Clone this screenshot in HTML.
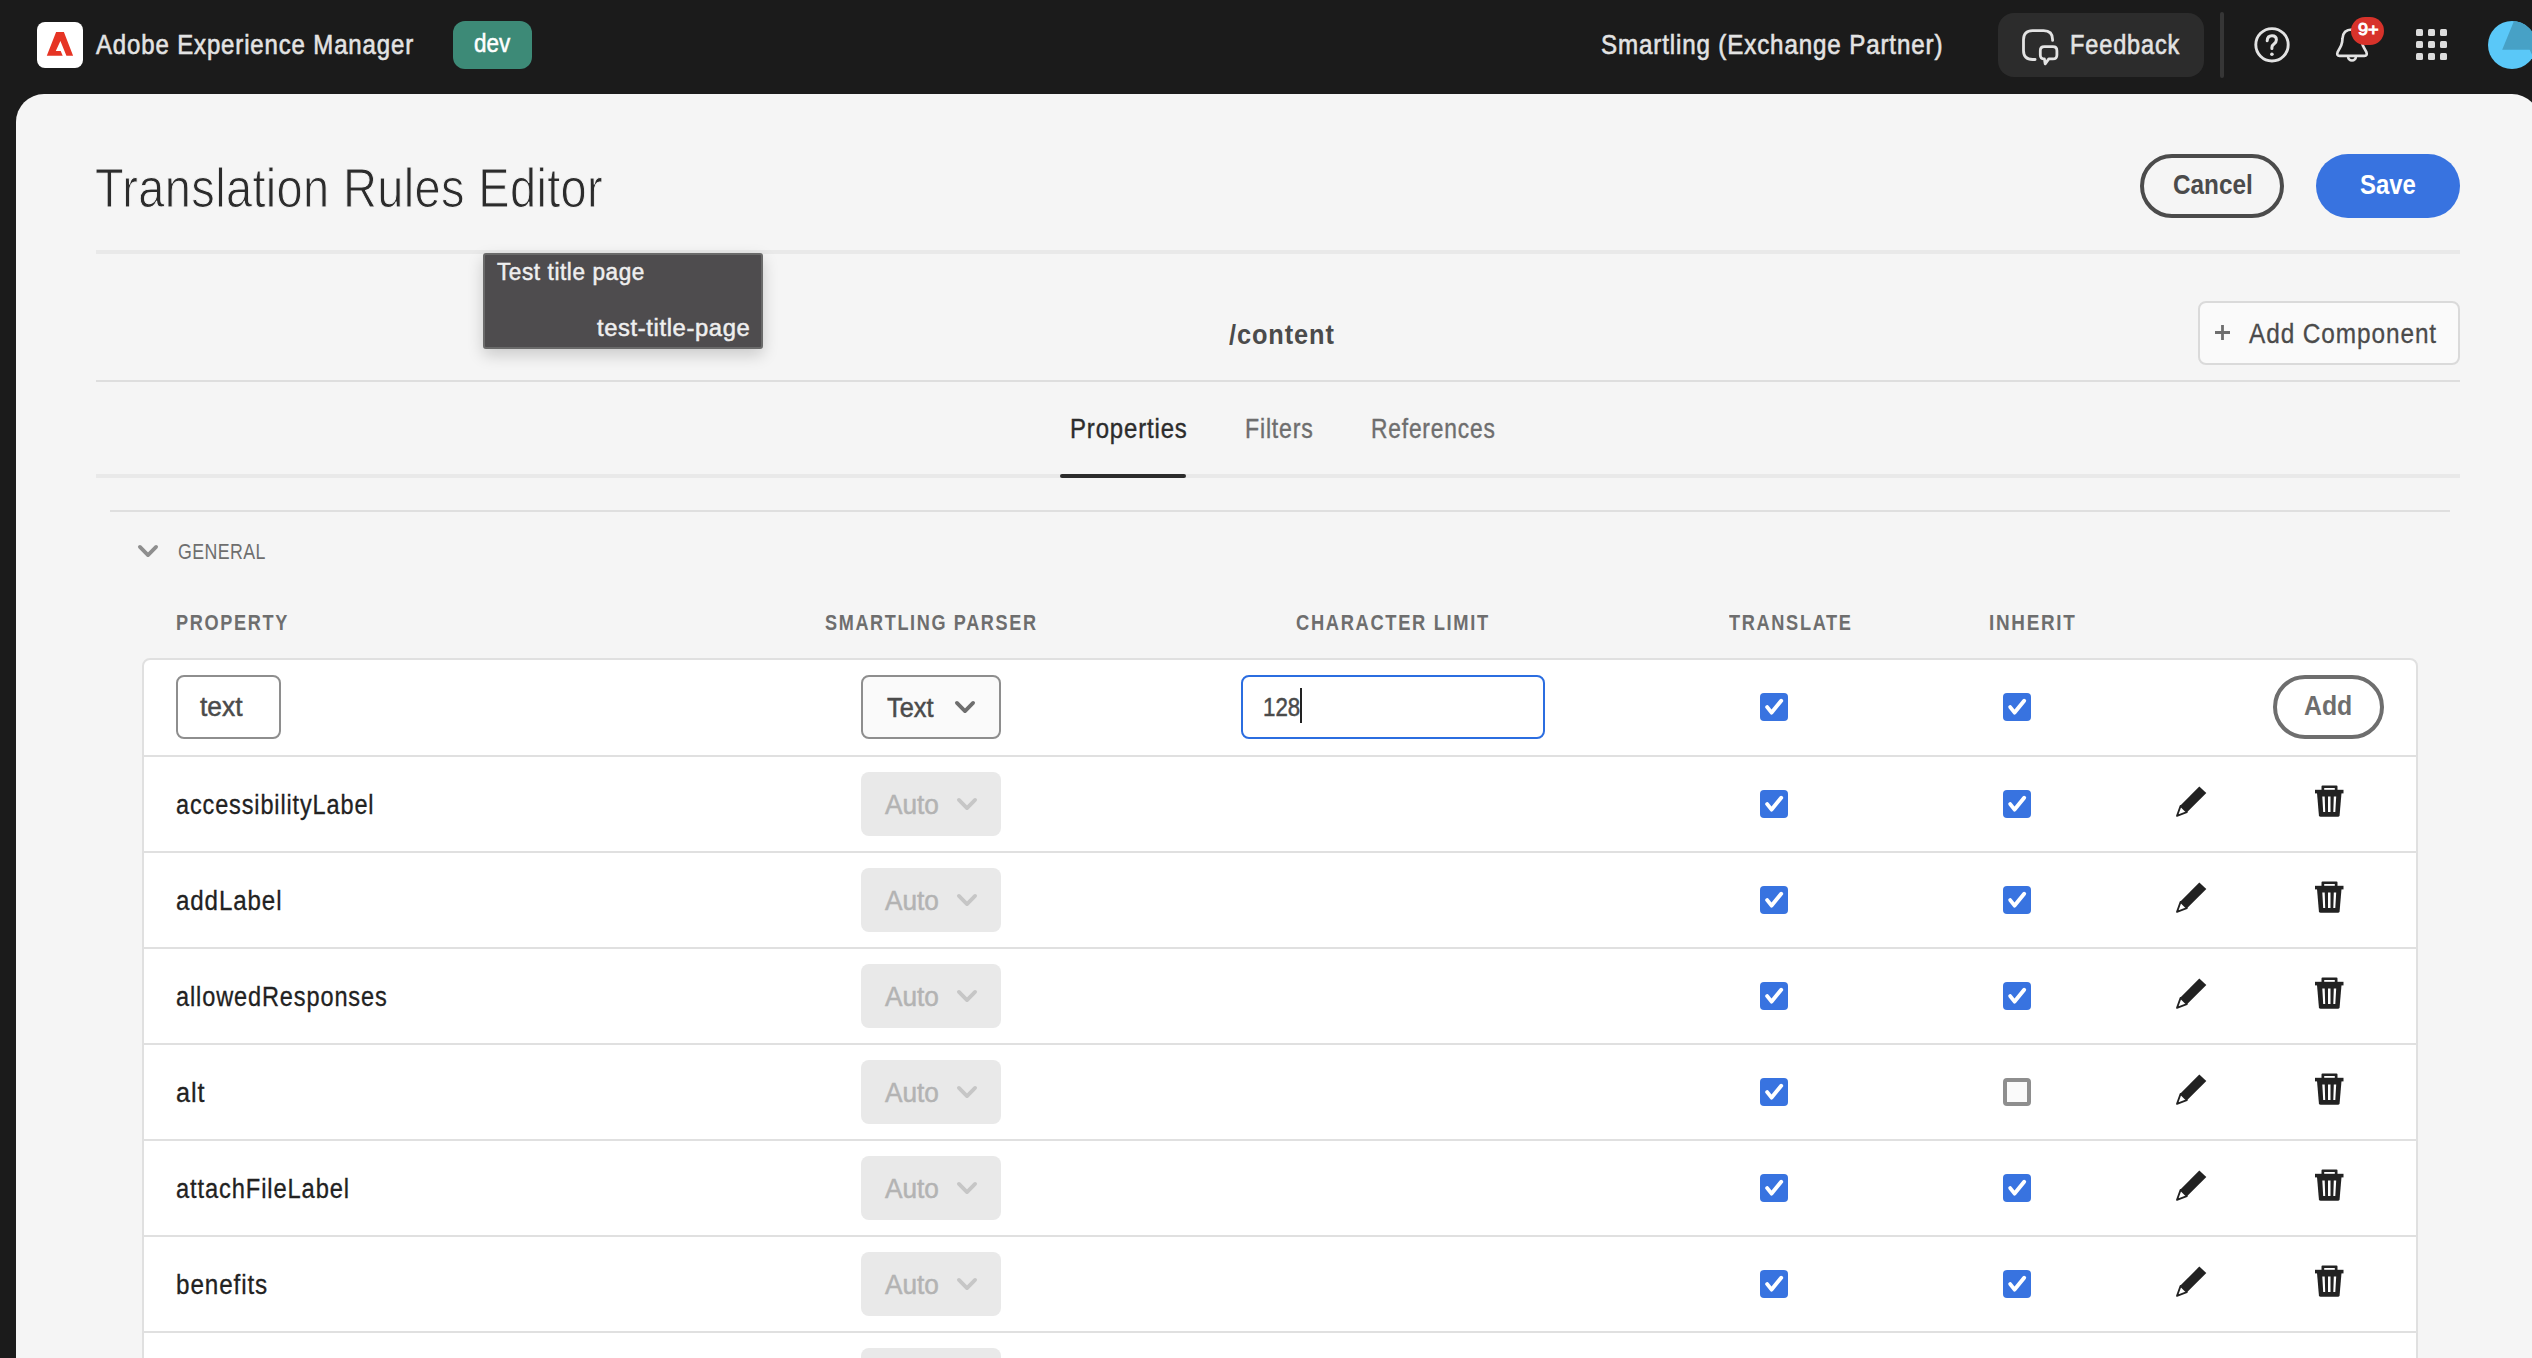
<!DOCTYPE html>
<html><head><meta charset="utf-8"><title>Translation Rules Editor</title>
<style>
html,body{margin:0;padding:0;width:2532px;height:1358px;overflow:hidden;background:#1b1b1b;}
.a{position:absolute;box-sizing:content-box;}
.t{position:absolute;line-height:1;white-space:nowrap;transform-origin:0 0;}
svg.a{overflow:visible;}
#root{position:absolute;left:0;top:0;width:2532px;height:1358px;overflow:hidden;background:#1b1b1b;transform-origin:0 0;}
</style></head><body>
<div id="root">
<div class=a style="left:37px;top:22px;width:46px;height:46px;border-radius:8px;background:#fff"></div>
<svg class=a style="left:0;top:0" width="100" height="94"><path d="M56.1 32.1 L63.9 32.1 L73.1 55.8 L66.4 55.8 L60.4 41.1 L55.8 51 L60.7 51 L62.7 55.8 L46.8 55.8 Z" fill="#e63424"/></svg>
<div class=a style="left:453px;top:21px;width:79px;height:48px;border-radius:12px;background:#3d8a77"></div>
<div class=a style="left:1998px;top:13px;width:206px;height:64px;border-radius:16px;background:#2c2c2c"></div>
<svg class=a style="left:2018px;top:25px" width="44" height="44" viewBox="0 0 44 44"><path d="M17.1 34.5 H14.5 Q5.5 34.5 5.5 25.5 V14.7 Q5.5 5.7 14.5 5.7 H25.6 Q34.6 5.7 34.6 14.7 V15.4" fill="none" stroke="#e3e3e3" stroke-width="2.8" stroke-linecap="round"/><path d="M26.3 21.7 H34.9 Q38.9 21.7 38.9 25.7 V29.9 Q38.9 33.9 34.9 33.9 H30.8 L27.2 38.8 L26.4 33.9 Q22.3 33.9 22.3 29.9 V25.7 Q22.3 21.7 26.3 21.7 Z" fill="none" stroke="#e3e3e3" stroke-width="2.8" stroke-linejoin="round"/></svg>
<div class=a style="left:2220px;top:12px;width:4px;height:66px;border-radius:2px;background:#363636"></div>
<svg class=a style="left:2250px;top:23px" width="44" height="44" viewBox="0 0 44 44"><circle cx="22" cy="21.8" r="16.2" fill="none" stroke="#e3e3e3" stroke-width="2.9"/><path d="M17.2 17.8 Q17.4 12.8 22 12.8 Q26.4 12.8 26.4 16.8 Q26.4 19.2 24.2 20.8 Q21.9 22.4 21.9 24.6 V25.6" fill="none" stroke="#e3e3e3" stroke-width="3" stroke-linecap="round" stroke-linejoin="round"/><circle cx="21.9" cy="31.3" r="1.8" fill="#e3e3e3"/></svg>
<svg class=a style="left:2330px;top:23px" width="44" height="44" viewBox="0 0 44 44"><path d="M22 6.5 C16 6.5 12.8 9.8 12.5 15.5 L12.1 19.3 Q11.6 22.3 9.5 25.7 L7.6 29.2 Q6.3 32.8 9.6 32.8 H34.4 Q37.7 32.8 36.4 29.2 L34.5 25.7 Q32.4 22.3 31.9 19.3 L31.5 15.5 C31.2 9.8 28 6.5 22 6.5 Z" fill="none" stroke="#e3e3e3" stroke-width="2.65" stroke-linejoin="round"/><path d="M18.1 33.6 A3.9 3.9 0 0 0 25.9 33.6" fill="none" stroke="#e3e3e3" stroke-width="2.65"/></svg>
<div class=a style="left:2351px;top:17px;width:33px;height:28px;border-radius:14px;background:#d7322a"></div>
<div class=a style="left:2416px;top:29px;width:7px;height:7px;border-radius:1.5px;background:#dcdcdc"></div>
<div class=a style="left:2428px;top:29px;width:7px;height:7px;border-radius:1.5px;background:#dcdcdc"></div>
<div class=a style="left:2440px;top:29px;width:7px;height:7px;border-radius:1.5px;background:#dcdcdc"></div>
<div class=a style="left:2416px;top:41px;width:7px;height:7px;border-radius:1.5px;background:#dcdcdc"></div>
<div class=a style="left:2428px;top:41px;width:7px;height:7px;border-radius:1.5px;background:#dcdcdc"></div>
<div class=a style="left:2440px;top:41px;width:7px;height:7px;border-radius:1.5px;background:#dcdcdc"></div>
<div class=a style="left:2416px;top:53px;width:7px;height:7px;border-radius:1.5px;background:#dcdcdc"></div>
<div class=a style="left:2428px;top:53px;width:7px;height:7px;border-radius:1.5px;background:#dcdcdc"></div>
<div class=a style="left:2440px;top:53px;width:7px;height:7px;border-radius:1.5px;background:#dcdcdc"></div>
<svg class=a style="left:2480px;top:13px" width="70" height="70" viewBox="2480 13 70 70"><defs><clipPath id="av"><circle cx="2512" cy="45" r="24"/></clipPath></defs><circle cx="2512" cy="45" r="24" fill="#5ac8f8"/><path d="M2522.6 0 L2502.2 49.7 L2529.7 49.7 L2543.4 80 L2560 80 L2560 0 Z" fill="#47a1c6" clip-path="url(#av)"/></svg>
<div class=a style="left:16px;top:94px;width:2524px;height:1300px;border-radius:28px 28px 0 0;background:#f5f5f5"></div>
<div class=a style="left:2140px;top:154px;width:136px;height:56px;border:4px solid #4b4b4b;border-radius:32px"></div>
<div class=a style="left:2316px;top:154px;width:144px;height:64px;border-radius:32px;background:#3873e0"></div>
<div class=a style="left:96px;top:250px;width:2364px;height:4px;background:#e9e9e9"></div>
<div class=a style="left:2198px;top:301px;width:258px;height:60px;border:2px solid #dadada;border-radius:8px;background:#fafafa"></div>
<svg class=a style="left:2212px;top:322px" width="20" height="20" viewBox="0 0 20 20"><path d="M10.5 3 V18 M3 10.5 H18" stroke="#6e6e6e" stroke-width="2.8"/></svg>
<div class=a style="left:96px;top:380px;width:2364px;height:2px;background:#dedede"></div>
<div class=a style="left:96px;top:474px;width:2364px;height:4px;background:#e9e9e9"></div>
<div class=a style="left:1060px;top:474px;width:126px;height:4px;border-radius:2px;background:#2c2c2c"></div>
<div class=a style="left:110px;top:510px;width:2340px;height:2px;background:#dfdfdf"></div>
<svg class=a style="left:135px;top:542px" width="26" height="18" viewBox="-3 -3 26 18"><path d="M1.9 1.9 L10.0 10.1 L18.1 1.9" fill="none" stroke="#8e8e8e" stroke-width="3.8" stroke-linecap="round" stroke-linejoin="round"/></svg>
<div class=a style="left:142px;top:658px;width:2272px;height:800px;border:2px solid #e0e0e0;border-radius:8px;background:#fff"></div>
<div class=a style="left:144px;top:755px;width:2272px;height:2px;background:#e0e0e0"></div>
<div class=a style="left:144px;top:851px;width:2272px;height:2px;background:#e0e0e0"></div>
<div class=a style="left:144px;top:947px;width:2272px;height:2px;background:#e0e0e0"></div>
<div class=a style="left:144px;top:1043px;width:2272px;height:2px;background:#e0e0e0"></div>
<div class=a style="left:144px;top:1139px;width:2272px;height:2px;background:#e0e0e0"></div>
<div class=a style="left:144px;top:1235px;width:2272px;height:2px;background:#e0e0e0"></div>
<div class=a style="left:144px;top:1331px;width:2272px;height:2px;background:#e0e0e0"></div>
<div class=a style="left:176px;top:675px;width:101px;height:60px;border:2px solid #8e8e8e;border-radius:8px;background:#fff"></div>
<div class=a style="left:861px;top:675px;width:136px;height:60px;border:2px solid #8e8e8e;border-radius:8px;background:#fafafa"></div>
<svg class=a style="left:952px;top:698px" width="26" height="18" viewBox="-3 -3 26 18"><path d="M1.9 1.9 L10.0 10.1 L18.1 1.9" fill="none" stroke="#6e6e6e" stroke-width="3.8" stroke-linecap="round" stroke-linejoin="round"/></svg>
<div class=a style="left:1241px;top:675px;width:300px;height:60px;border:2px solid #2b6de0;border-radius:8px;background:#fff"></div>
<div class=a style="left:1300px;top:688px;width:2px;height:35px;background:#222"></div>
<svg class=a style="left:1760px;top:693px" width="28" height="28" viewBox="0 0 28 28"><rect x="0" y="0" width="28" height="28" rx="4" fill="#3873e0"/><path d="M7.2 14.1 L11.6 19.6 L21.2 7.8" fill="none" stroke="#fff" stroke-width="3.9" stroke-linecap="round" stroke-linejoin="round"/></svg>
<svg class=a style="left:2003px;top:693px" width="28" height="28" viewBox="0 0 28 28"><rect x="0" y="0" width="28" height="28" rx="4" fill="#3873e0"/><path d="M7.2 14.1 L11.6 19.6 L21.2 7.8" fill="none" stroke="#fff" stroke-width="3.9" stroke-linecap="round" stroke-linejoin="round"/></svg>
<div class=a style="left:2273px;top:675px;width:103px;height:56px;border:4px solid #6e6e6e;border-radius:32px;background:#fff"></div>
<div class=a style="left:861px;top:772px;width:140px;height:64px;border-radius:8px;background:#e9e9e9"></div>
<svg class=a style="left:954px;top:795px" width="26" height="18" viewBox="-3 -3 26 18"><path d="M1.9 1.9 L10.0 10.1 L18.1 1.9" fill="none" stroke="#c6c6c6" stroke-width="3.8" stroke-linecap="round" stroke-linejoin="round"/></svg>
<svg class=a style="left:1760px;top:790px" width="28" height="28" viewBox="0 0 28 28"><rect x="0" y="0" width="28" height="28" rx="4" fill="#3873e0"/><path d="M7.2 14.1 L11.6 19.6 L21.2 7.8" fill="none" stroke="#fff" stroke-width="3.9" stroke-linecap="round" stroke-linejoin="round"/></svg>
<svg class=a style="left:2003px;top:790px" width="28" height="28" viewBox="0 0 28 28"><rect x="0" y="0" width="28" height="28" rx="4" fill="#3873e0"/><path d="M7.2 14.1 L11.6 19.6 L21.2 7.8" fill="none" stroke="#fff" stroke-width="3.9" stroke-linecap="round" stroke-linejoin="round"/></svg>
<svg class=a style="left:2176px;top:786px" width="32" height="32" viewBox="0 0 32 32"><path d="M23.3 0.6 L30.3 7 L11 26.3 L4.4 19.6 Z" fill="#222"/><path d="M4.6 19.9 L10.8 26.1 L1 29.9 Z" fill="#fff" stroke="#222" stroke-width="1.8" stroke-linejoin="round"/></svg>
<svg class=a style="left:2315px;top:785px" width="30" height="34" viewBox="0 0 30 34"><path d="M6.5 0.5 H21.5 Q22.5 0.5 22.5 1.5 V5 H19.8 V3 H9.2 V5 H6.5 V1.5 Q6.5 0.5 7.5 0.5 Z" fill="#222"/><rect x="0" y="4.8" width="28.5" height="3.6" fill="#222"/><path d="M2 8 H26.5 L24.6 30.2 Q24.4 31.8 22.8 31.8 H5.7 Q4.1 31.8 3.9 30.2 Z" fill="#222"/><path d="M7.3 11.5 L9.7 11.5 L10.2 27 L8.2 27 Z M13 11.5 H15.5 V27 H13 Z M18.8 11.5 L21.2 11.5 L20.3 27 L18.3 27 Z" fill="#fff"/></svg>
<div class=a style="left:861px;top:868px;width:140px;height:64px;border-radius:8px;background:#e9e9e9"></div>
<svg class=a style="left:954px;top:891px" width="26" height="18" viewBox="-3 -3 26 18"><path d="M1.9 1.9 L10.0 10.1 L18.1 1.9" fill="none" stroke="#c6c6c6" stroke-width="3.8" stroke-linecap="round" stroke-linejoin="round"/></svg>
<svg class=a style="left:1760px;top:886px" width="28" height="28" viewBox="0 0 28 28"><rect x="0" y="0" width="28" height="28" rx="4" fill="#3873e0"/><path d="M7.2 14.1 L11.6 19.6 L21.2 7.8" fill="none" stroke="#fff" stroke-width="3.9" stroke-linecap="round" stroke-linejoin="round"/></svg>
<svg class=a style="left:2003px;top:886px" width="28" height="28" viewBox="0 0 28 28"><rect x="0" y="0" width="28" height="28" rx="4" fill="#3873e0"/><path d="M7.2 14.1 L11.6 19.6 L21.2 7.8" fill="none" stroke="#fff" stroke-width="3.9" stroke-linecap="round" stroke-linejoin="round"/></svg>
<svg class=a style="left:2176px;top:882px" width="32" height="32" viewBox="0 0 32 32"><path d="M23.3 0.6 L30.3 7 L11 26.3 L4.4 19.6 Z" fill="#222"/><path d="M4.6 19.9 L10.8 26.1 L1 29.9 Z" fill="#fff" stroke="#222" stroke-width="1.8" stroke-linejoin="round"/></svg>
<svg class=a style="left:2315px;top:881px" width="30" height="34" viewBox="0 0 30 34"><path d="M6.5 0.5 H21.5 Q22.5 0.5 22.5 1.5 V5 H19.8 V3 H9.2 V5 H6.5 V1.5 Q6.5 0.5 7.5 0.5 Z" fill="#222"/><rect x="0" y="4.8" width="28.5" height="3.6" fill="#222"/><path d="M2 8 H26.5 L24.6 30.2 Q24.4 31.8 22.8 31.8 H5.7 Q4.1 31.8 3.9 30.2 Z" fill="#222"/><path d="M7.3 11.5 L9.7 11.5 L10.2 27 L8.2 27 Z M13 11.5 H15.5 V27 H13 Z M18.8 11.5 L21.2 11.5 L20.3 27 L18.3 27 Z" fill="#fff"/></svg>
<div class=a style="left:861px;top:964px;width:140px;height:64px;border-radius:8px;background:#e9e9e9"></div>
<svg class=a style="left:954px;top:987px" width="26" height="18" viewBox="-3 -3 26 18"><path d="M1.9 1.9 L10.0 10.1 L18.1 1.9" fill="none" stroke="#c6c6c6" stroke-width="3.8" stroke-linecap="round" stroke-linejoin="round"/></svg>
<svg class=a style="left:1760px;top:982px" width="28" height="28" viewBox="0 0 28 28"><rect x="0" y="0" width="28" height="28" rx="4" fill="#3873e0"/><path d="M7.2 14.1 L11.6 19.6 L21.2 7.8" fill="none" stroke="#fff" stroke-width="3.9" stroke-linecap="round" stroke-linejoin="round"/></svg>
<svg class=a style="left:2003px;top:982px" width="28" height="28" viewBox="0 0 28 28"><rect x="0" y="0" width="28" height="28" rx="4" fill="#3873e0"/><path d="M7.2 14.1 L11.6 19.6 L21.2 7.8" fill="none" stroke="#fff" stroke-width="3.9" stroke-linecap="round" stroke-linejoin="round"/></svg>
<svg class=a style="left:2176px;top:978px" width="32" height="32" viewBox="0 0 32 32"><path d="M23.3 0.6 L30.3 7 L11 26.3 L4.4 19.6 Z" fill="#222"/><path d="M4.6 19.9 L10.8 26.1 L1 29.9 Z" fill="#fff" stroke="#222" stroke-width="1.8" stroke-linejoin="round"/></svg>
<svg class=a style="left:2315px;top:977px" width="30" height="34" viewBox="0 0 30 34"><path d="M6.5 0.5 H21.5 Q22.5 0.5 22.5 1.5 V5 H19.8 V3 H9.2 V5 H6.5 V1.5 Q6.5 0.5 7.5 0.5 Z" fill="#222"/><rect x="0" y="4.8" width="28.5" height="3.6" fill="#222"/><path d="M2 8 H26.5 L24.6 30.2 Q24.4 31.8 22.8 31.8 H5.7 Q4.1 31.8 3.9 30.2 Z" fill="#222"/><path d="M7.3 11.5 L9.7 11.5 L10.2 27 L8.2 27 Z M13 11.5 H15.5 V27 H13 Z M18.8 11.5 L21.2 11.5 L20.3 27 L18.3 27 Z" fill="#fff"/></svg>
<div class=a style="left:861px;top:1060px;width:140px;height:64px;border-radius:8px;background:#e9e9e9"></div>
<svg class=a style="left:954px;top:1083px" width="26" height="18" viewBox="-3 -3 26 18"><path d="M1.9 1.9 L10.0 10.1 L18.1 1.9" fill="none" stroke="#c6c6c6" stroke-width="3.8" stroke-linecap="round" stroke-linejoin="round"/></svg>
<svg class=a style="left:1760px;top:1078px" width="28" height="28" viewBox="0 0 28 28"><rect x="0" y="0" width="28" height="28" rx="4" fill="#3873e0"/><path d="M7.2 14.1 L11.6 19.6 L21.2 7.8" fill="none" stroke="#fff" stroke-width="3.9" stroke-linecap="round" stroke-linejoin="round"/></svg>
<div class=a style="left:2003px;top:1078px;width:20px;height:20px;border:4px solid #8e8e8e;border-radius:4px;background:#fafafa"></div>
<svg class=a style="left:2176px;top:1074px" width="32" height="32" viewBox="0 0 32 32"><path d="M23.3 0.6 L30.3 7 L11 26.3 L4.4 19.6 Z" fill="#222"/><path d="M4.6 19.9 L10.8 26.1 L1 29.9 Z" fill="#fff" stroke="#222" stroke-width="1.8" stroke-linejoin="round"/></svg>
<svg class=a style="left:2315px;top:1073px" width="30" height="34" viewBox="0 0 30 34"><path d="M6.5 0.5 H21.5 Q22.5 0.5 22.5 1.5 V5 H19.8 V3 H9.2 V5 H6.5 V1.5 Q6.5 0.5 7.5 0.5 Z" fill="#222"/><rect x="0" y="4.8" width="28.5" height="3.6" fill="#222"/><path d="M2 8 H26.5 L24.6 30.2 Q24.4 31.8 22.8 31.8 H5.7 Q4.1 31.8 3.9 30.2 Z" fill="#222"/><path d="M7.3 11.5 L9.7 11.5 L10.2 27 L8.2 27 Z M13 11.5 H15.5 V27 H13 Z M18.8 11.5 L21.2 11.5 L20.3 27 L18.3 27 Z" fill="#fff"/></svg>
<div class=a style="left:861px;top:1156px;width:140px;height:64px;border-radius:8px;background:#e9e9e9"></div>
<svg class=a style="left:954px;top:1179px" width="26" height="18" viewBox="-3 -3 26 18"><path d="M1.9 1.9 L10.0 10.1 L18.1 1.9" fill="none" stroke="#c6c6c6" stroke-width="3.8" stroke-linecap="round" stroke-linejoin="round"/></svg>
<svg class=a style="left:1760px;top:1174px" width="28" height="28" viewBox="0 0 28 28"><rect x="0" y="0" width="28" height="28" rx="4" fill="#3873e0"/><path d="M7.2 14.1 L11.6 19.6 L21.2 7.8" fill="none" stroke="#fff" stroke-width="3.9" stroke-linecap="round" stroke-linejoin="round"/></svg>
<svg class=a style="left:2003px;top:1174px" width="28" height="28" viewBox="0 0 28 28"><rect x="0" y="0" width="28" height="28" rx="4" fill="#3873e0"/><path d="M7.2 14.1 L11.6 19.6 L21.2 7.8" fill="none" stroke="#fff" stroke-width="3.9" stroke-linecap="round" stroke-linejoin="round"/></svg>
<svg class=a style="left:2176px;top:1170px" width="32" height="32" viewBox="0 0 32 32"><path d="M23.3 0.6 L30.3 7 L11 26.3 L4.4 19.6 Z" fill="#222"/><path d="M4.6 19.9 L10.8 26.1 L1 29.9 Z" fill="#fff" stroke="#222" stroke-width="1.8" stroke-linejoin="round"/></svg>
<svg class=a style="left:2315px;top:1169px" width="30" height="34" viewBox="0 0 30 34"><path d="M6.5 0.5 H21.5 Q22.5 0.5 22.5 1.5 V5 H19.8 V3 H9.2 V5 H6.5 V1.5 Q6.5 0.5 7.5 0.5 Z" fill="#222"/><rect x="0" y="4.8" width="28.5" height="3.6" fill="#222"/><path d="M2 8 H26.5 L24.6 30.2 Q24.4 31.8 22.8 31.8 H5.7 Q4.1 31.8 3.9 30.2 Z" fill="#222"/><path d="M7.3 11.5 L9.7 11.5 L10.2 27 L8.2 27 Z M13 11.5 H15.5 V27 H13 Z M18.8 11.5 L21.2 11.5 L20.3 27 L18.3 27 Z" fill="#fff"/></svg>
<div class=a style="left:861px;top:1252px;width:140px;height:64px;border-radius:8px;background:#e9e9e9"></div>
<svg class=a style="left:954px;top:1275px" width="26" height="18" viewBox="-3 -3 26 18"><path d="M1.9 1.9 L10.0 10.1 L18.1 1.9" fill="none" stroke="#c6c6c6" stroke-width="3.8" stroke-linecap="round" stroke-linejoin="round"/></svg>
<svg class=a style="left:1760px;top:1270px" width="28" height="28" viewBox="0 0 28 28"><rect x="0" y="0" width="28" height="28" rx="4" fill="#3873e0"/><path d="M7.2 14.1 L11.6 19.6 L21.2 7.8" fill="none" stroke="#fff" stroke-width="3.9" stroke-linecap="round" stroke-linejoin="round"/></svg>
<svg class=a style="left:2003px;top:1270px" width="28" height="28" viewBox="0 0 28 28"><rect x="0" y="0" width="28" height="28" rx="4" fill="#3873e0"/><path d="M7.2 14.1 L11.6 19.6 L21.2 7.8" fill="none" stroke="#fff" stroke-width="3.9" stroke-linecap="round" stroke-linejoin="round"/></svg>
<svg class=a style="left:2176px;top:1266px" width="32" height="32" viewBox="0 0 32 32"><path d="M23.3 0.6 L30.3 7 L11 26.3 L4.4 19.6 Z" fill="#222"/><path d="M4.6 19.9 L10.8 26.1 L1 29.9 Z" fill="#fff" stroke="#222" stroke-width="1.8" stroke-linejoin="round"/></svg>
<svg class=a style="left:2315px;top:1265px" width="30" height="34" viewBox="0 0 30 34"><path d="M6.5 0.5 H21.5 Q22.5 0.5 22.5 1.5 V5 H19.8 V3 H9.2 V5 H6.5 V1.5 Q6.5 0.5 7.5 0.5 Z" fill="#222"/><rect x="0" y="4.8" width="28.5" height="3.6" fill="#222"/><path d="M2 8 H26.5 L24.6 30.2 Q24.4 31.8 22.8 31.8 H5.7 Q4.1 31.8 3.9 30.2 Z" fill="#222"/><path d="M7.3 11.5 L9.7 11.5 L10.2 27 L8.2 27 Z M13 11.5 H15.5 V27 H13 Z M18.8 11.5 L21.2 11.5 L20.3 27 L18.3 27 Z" fill="#fff"/></svg>
<div class=a style="left:861px;top:1348px;width:140px;height:64px;border-radius:8px;background:#e9e9e9"></div>
<div class=a style="left:483px;top:253px;width:276px;height:92px;border:2px solid #6a6a6a;border-radius:3px;background:#4e4c4e;box-shadow:0 6px 16px rgba(0,0,0,0.18)"></div>
<div class=t style="left:96.00px;top:31.00px;font-family:'Liberation Sans',sans-serif;font-size:28px;font-weight:400;color:#e3e3e3;letter-spacing:1px;-webkit-text-stroke:0.6px #e3e3e3;transform:scaleX(0.8568);">Adobe Experience Manager</div>
<div class=t style="left:474.10px;top:31.00px;font-family:'Liberation Sans',sans-serif;font-size:25px;font-weight:400;color:#ffffff;-webkit-text-stroke:0.5px #ffffff;transform:scaleX(0.8974);">dev</div>
<div class=t style="left:1601.14px;top:31.00px;font-family:'Liberation Sans',sans-serif;font-size:28px;font-weight:400;color:#e3e3e3;letter-spacing:1px;-webkit-text-stroke:0.6px #e3e3e3;transform:scaleX(0.8626);">Smartling (Exchange Partner)</div>
<div class=t style="left:2070.26px;top:31.60px;font-family:'Liberation Sans',sans-serif;font-size:27px;font-weight:400;color:#e3e3e3;letter-spacing:1px;-webkit-text-stroke:0.6px #e3e3e3;transform:scaleX(0.8710);">Feedback</div>
<div class=t style="left:2357.80px;top:20.60px;font-family:'Liberation Sans',sans-serif;font-size:16.5px;font-weight:400;color:#ffffff;-webkit-text-stroke:0.9px #ffffff;transform:scaleX(1.1000);">9+</div>
<div class=t style="left:95.15px;top:161.00px;font-family:'Liberation Sans',sans-serif;font-size:55px;font-weight:400;color:#2c2c2c;letter-spacing:0.4px;-webkit-text-stroke:1.0px #f5f5f5;transform:scaleX(0.8547);">Translation Rules Editor</div>
<div class=t style="left:2172.70px;top:172.00px;font-family:'Liberation Sans',sans-serif;font-size:27px;font-weight:700;color:#4b4b4b;transform:scaleX(0.9000);">Cancel</div>
<div class=t style="left:2359.81px;top:172.00px;font-family:'Liberation Sans',sans-serif;font-size:27px;font-weight:700;color:#ffffff;transform:scaleX(0.8852);">Save</div>
<div class=t style="left:497.00px;top:261.00px;font-family:'Liberation Sans',sans-serif;font-size:23px;font-weight:400;color:#efefef;letter-spacing:0.6px;-webkit-text-stroke:0.5px #efefef;transform:scaleX(0.9800);">Test title page</div>
<div class=t style="left:597.00px;top:317.00px;font-family:'Liberation Sans',sans-serif;font-size:23px;font-weight:400;color:#efefef;letter-spacing:0.6px;-webkit-text-stroke:0.5px #efefef;transform:scaleX(1.0340);">test-title-page</div>
<div class=t style="left:1229.00px;top:321.00px;font-family:'Liberation Sans',sans-serif;font-size:28px;font-weight:700;color:#4b4b4b;letter-spacing:1px;transform:scaleX(0.9052);">/content</div>
<div class=t style="left:2249.30px;top:320.70px;font-family:'Liberation Sans',sans-serif;font-size:27px;font-weight:400;color:#4b4b4b;letter-spacing:1px;-webkit-text-stroke:0.3px #4b4b4b;transform:scaleX(0.9034);">Add Component</div>
<div class=t style="left:1069.89px;top:415.00px;font-family:'Liberation Sans',sans-serif;font-size:28px;font-weight:400;color:#2c2c2c;letter-spacing:1px;-webkit-text-stroke:0.4px #2c2c2c;transform:scaleX(0.8552);">Properties</div>
<div class=t style="left:1244.95px;top:415.00px;font-family:'Liberation Sans',sans-serif;font-size:28px;font-weight:400;color:#6e6e6e;letter-spacing:1px;-webkit-text-stroke:0.4px #6e6e6e;transform:scaleX(0.8250);">Filters</div>
<div class=t style="left:1371.37px;top:415.00px;font-family:'Liberation Sans',sans-serif;font-size:28px;font-weight:400;color:#6e6e6e;letter-spacing:1px;-webkit-text-stroke:0.4px #6e6e6e;transform:scaleX(0.8133);">References</div>
<div class=t style="left:177.79px;top:541.00px;font-family:'Liberation Sans',sans-serif;font-size:22px;font-weight:400;color:#6e6e6e;letter-spacing:0.5px;transform:scaleX(0.8075);">GENERAL</div>
<div class=t style="left:176.18px;top:612.00px;font-family:'Liberation Sans',sans-serif;font-size:22px;font-weight:700;color:#6e6e6e;letter-spacing:2px;transform:scaleX(0.8239);">PROPERTY</div>
<div class=t style="left:825.00px;top:612.00px;font-family:'Liberation Sans',sans-serif;font-size:22px;font-weight:700;color:#6e6e6e;letter-spacing:2px;transform:scaleX(0.8210);">SMARTLING PARSER</div>
<div class=t style="left:1295.67px;top:612.00px;font-family:'Liberation Sans',sans-serif;font-size:22px;font-weight:700;color:#6e6e6e;letter-spacing:2px;transform:scaleX(0.8326);">CHARACTER LIMIT</div>
<div class=t style="left:1728.80px;top:612.00px;font-family:'Liberation Sans',sans-serif;font-size:22px;font-weight:700;color:#6e6e6e;letter-spacing:2px;transform:scaleX(0.8265);">TRANSLATE</div>
<div class=t style="left:1989.14px;top:612.00px;font-family:'Liberation Sans',sans-serif;font-size:22px;font-weight:700;color:#6e6e6e;letter-spacing:2px;transform:scaleX(0.8586);">INHERIT</div>
<div class=t style="left:200.00px;top:694.00px;font-family:'Liberation Sans',sans-serif;font-size:27px;font-weight:400;color:#4b4b4b;-webkit-text-stroke:0.5px #4b4b4b;transform:scaleX(0.9773);">text</div>
<div class=t style="left:887.00px;top:695.00px;font-family:'Liberation Sans',sans-serif;font-size:27px;font-weight:400;color:#4b4b4b;-webkit-text-stroke:0.5px #4b4b4b;transform:scaleX(0.9400);">Text</div>
<div class=t style="left:1262.78px;top:694.00px;font-family:'Liberation Sans',sans-serif;font-size:26px;font-weight:400;color:#4b4b4b;-webkit-text-stroke:0.5px #4b4b4b;transform:scaleX(0.8585);">128</div>
<div class=t style="left:2304.08px;top:692.70px;font-family:'Liberation Sans',sans-serif;font-size:27px;font-weight:700;color:#6e6e6e;transform:scaleX(0.9200);">Add</div>
<div class=t style="left:175.73px;top:792.00px;font-family:'Liberation Sans',sans-serif;font-size:27px;font-weight:400;color:#222222;letter-spacing:1px;-webkit-text-stroke:0.3px #222222;transform:scaleX(0.8698);">accessibilityLabel</div>
<div class=t style="left:885.20px;top:791.60px;font-family:'Liberation Sans',sans-serif;font-size:27px;font-weight:400;color:#b3b3b3;-webkit-text-stroke:0.5px #b3b3b3;transform:scaleX(0.9709);">Auto</div>
<div class=t style="left:175.71px;top:888.00px;font-family:'Liberation Sans',sans-serif;font-size:27px;font-weight:400;color:#222222;letter-spacing:1px;-webkit-text-stroke:0.3px #222222;transform:scaleX(0.8931);">addLabel</div>
<div class=t style="left:885.20px;top:887.60px;font-family:'Liberation Sans',sans-serif;font-size:27px;font-weight:400;color:#b3b3b3;-webkit-text-stroke:0.5px #b3b3b3;transform:scaleX(0.9709);">Auto</div>
<div class=t style="left:175.73px;top:984.00px;font-family:'Liberation Sans',sans-serif;font-size:27px;font-weight:400;color:#222222;letter-spacing:1px;-webkit-text-stroke:0.3px #222222;transform:scaleX(0.8721);">allowedResponses</div>
<div class=t style="left:885.20px;top:983.60px;font-family:'Liberation Sans',sans-serif;font-size:27px;font-weight:400;color:#b3b3b3;-webkit-text-stroke:0.5px #b3b3b3;transform:scaleX(0.9709);">Auto</div>
<div class=t style="left:175.67px;top:1080.00px;font-family:'Liberation Sans',sans-serif;font-size:27px;font-weight:400;color:#222222;letter-spacing:1px;-webkit-text-stroke:0.3px #222222;transform:scaleX(0.9333);">alt</div>
<div class=t style="left:885.20px;top:1079.60px;font-family:'Liberation Sans',sans-serif;font-size:27px;font-weight:400;color:#b3b3b3;-webkit-text-stroke:0.5px #b3b3b3;transform:scaleX(0.9709);">Auto</div>
<div class=t style="left:175.72px;top:1176.00px;font-family:'Liberation Sans',sans-serif;font-size:27px;font-weight:400;color:#222222;letter-spacing:1px;-webkit-text-stroke:0.3px #222222;transform:scaleX(0.8779);">attachFileLabel</div>
<div class=t style="left:885.20px;top:1175.60px;font-family:'Liberation Sans',sans-serif;font-size:27px;font-weight:400;color:#b3b3b3;-webkit-text-stroke:0.5px #b3b3b3;transform:scaleX(0.9709);">Auto</div>
<div class=t style="left:175.70px;top:1272.00px;font-family:'Liberation Sans',sans-serif;font-size:27px;font-weight:400;color:#222222;letter-spacing:1px;-webkit-text-stroke:0.3px #222222;transform:scaleX(0.8980);">benefits</div>
<div class=t style="left:885.20px;top:1271.60px;font-family:'Liberation Sans',sans-serif;font-size:27px;font-weight:400;color:#b3b3b3;-webkit-text-stroke:0.5px #b3b3b3;transform:scaleX(0.9709);">Auto</div>
</div>
<script>(function(){var w=window.innerWidth||2532;var s=w/2532;if(Math.abs(s-1)>0.01){document.getElementById('root').style.transform='scale('+s+')';}})();</script>
</body></html>
